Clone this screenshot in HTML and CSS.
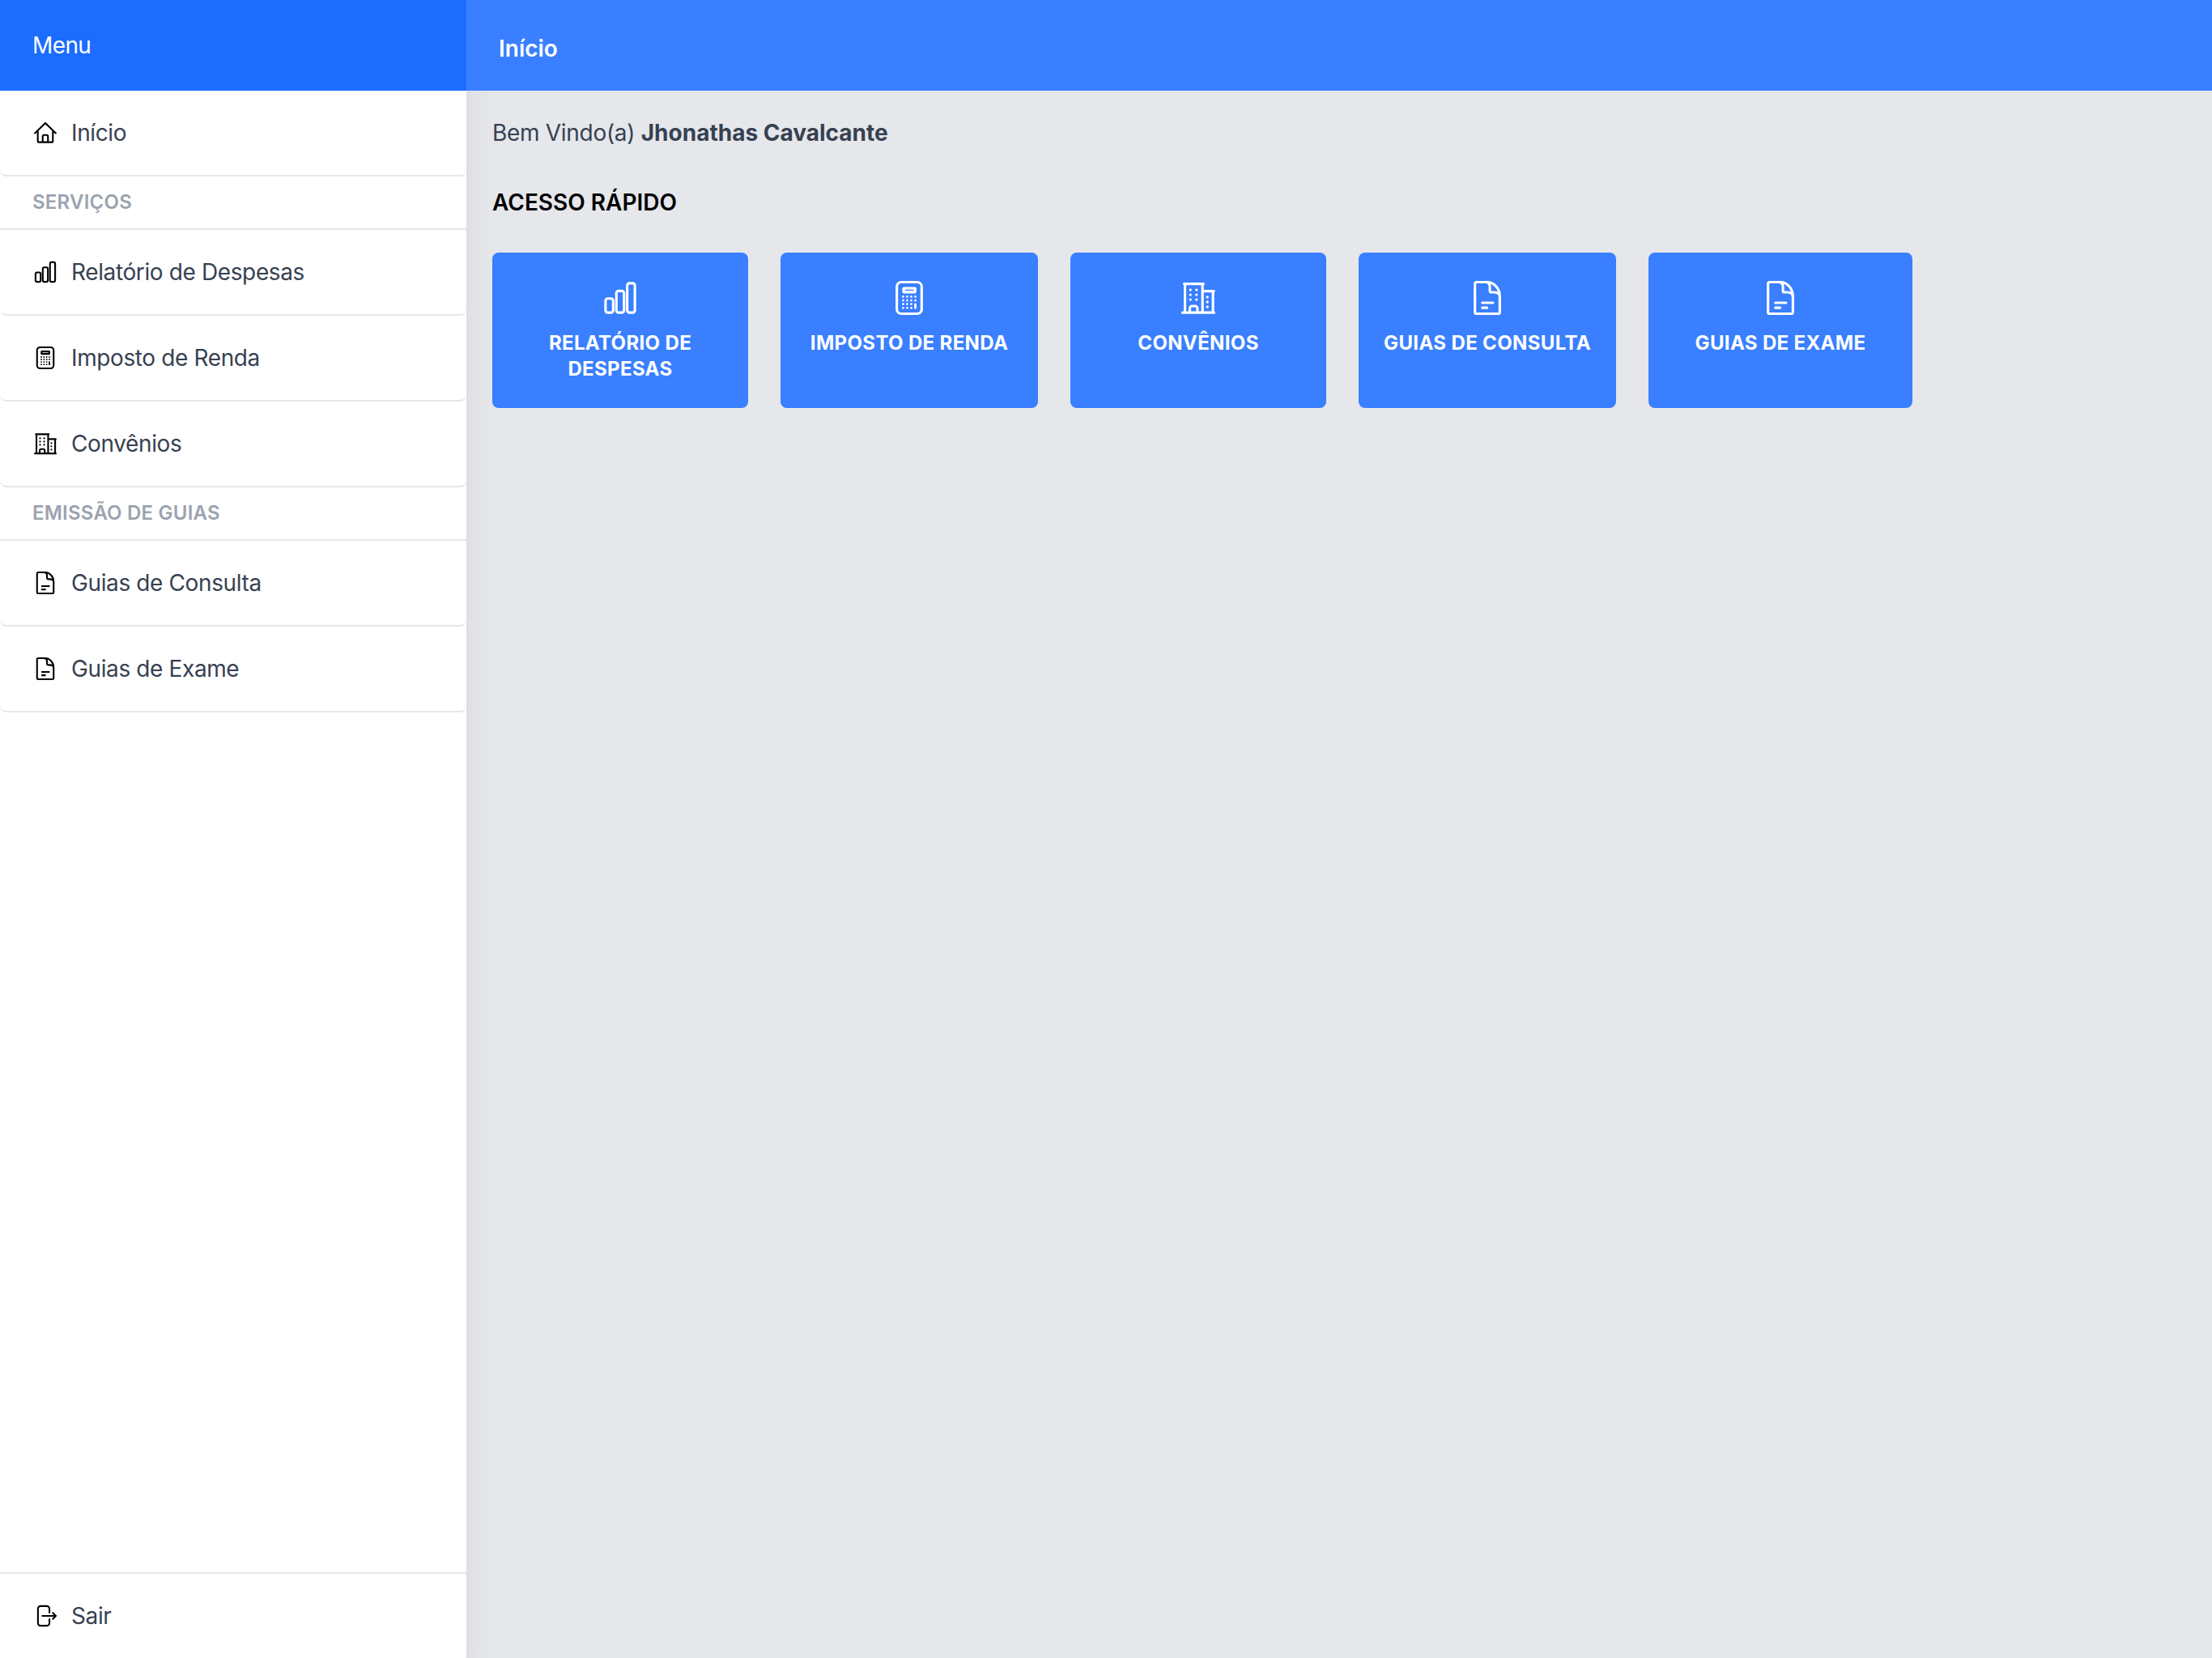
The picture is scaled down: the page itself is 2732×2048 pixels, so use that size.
FILE: index.html
```html
<!DOCTYPE html>
<html lang="pt-BR">
<head>
<meta charset="utf-8">
<title>Início</title>
<link rel="stylesheet" href="styles.css">
</head>
<body>
<svg class="sprite" aria-hidden="true">
  <symbol id="home" viewBox="-1.2 -1.2 34.4 34.4"><path d="M2.200 16.500 16 3l13.800 13.500M6 14v13.500a1 1 0 0 0 1 1h18a1 1 0 0 0 1-1V14M12.500 28v-7a2 2 0 0 1 2-2h3a2 2 0 0 1 2 2v7"/></symbol>
  <symbol id="bars" viewBox="-1.2 -1.2 34.4 34.4"><rect x="3" y="16.500" width="6.800" height="12.500" rx="2"/><rect x="12.600" y="9.800" width="6.800" height="19.200" rx="2"/><rect x="22.200" y="3" width="6.800" height="26" rx="2"/></symbol>
  <symbol id="calc" viewBox="-1.2 -1.2 34.4 34.4"><rect x="5" y="2" width="22" height="28" rx="4"/><rect class="thick" x="11" y="7.500" width="10.200" height="3.300" rx=".3"/><path class="keys" d="M10.600 14.900v0M14.200 14.900v0M17.800 14.900v0M21.400 14.900v0M10.600 18.200v0M14.200 18.200v0M17.800 18.200v0M21.400 18.200v0M10.600 21.500v0M14.200 21.500v0M17.800 21.500v0M10.600 24.800v0M14.200 24.800v0M17.800 24.800v0M21.400 21.600v3.200"/></symbol>
  <symbol id="building" viewBox="-1.2 -1.2 34.4 34.4"><path d="M3.400 3.500h17.200M4.200 3.500V29M19.700 3.500V29M20 10h9.800M29 10v19M2 29h28M8.500 29v-3.800a2 2 0 0 1 2-2h2.700a2 2 0 0 1 2 2V29"/><path class="thick" d="M9 8.900v0M14.400 8.900v0M9 13.200v0M14.400 13.200v0M9 17.500v0M14.400 17.500v0M24 15.300v0M24 19.600v0M24 23.900v0"/></symbol>
  <symbol id="doc" viewBox="-1.2 -1.2 34.4 34.4"><path d="M6.500 2H16c6 0 11 6 11 12.500v14a1.500 1.500 0 0 1-1.500 1.500h-19A1.500 1.500 0 0 1 5 28.500v-25A1.500 1.500 0 0 1 6.500 2ZM15 2c2.500.5 3.200 2.500 3.200 4v3.500a1.500 1.500 0 0 0 1.500 1.500H22c2.500 0 4.500 1 5 3.500M11.500 20.300h9.500M11.500 24.700h4.200"/></symbol>
  <symbol id="exit" viewBox="-1.2 -1.2 34.4 34.4"><path d="M21.400 11.600V6.500A3.500 3.500 0 0 0 17.900 3H9.700a3.500 3.500 0 0 0-3.500 3.500v19A3.500 3.500 0 0 0 9.700 29h8.200a3.500 3.500 0 0 0 3.500-3.500v-5.200M12 16h18M26 12l4 4-4 4"/></symbol>
</svg>
<div class="app">
  <aside class="sidebar">
    <div class="sidebar-head">Menu</div>
    <nav class="nav">
      <a class="item"><svg class="icon"><use href="#home"/></svg><span>Início</span></a>
      <div class="section">SERVIÇOS</div>
      <a class="item"><svg class="icon"><use href="#bars"/></svg><span>Relatório de Despesas</span></a>
      <a class="item"><svg class="icon"><use href="#calc"/></svg><span>Imposto de Renda</span></a>
      <a class="item"><svg class="icon"><use href="#building"/></svg><span>Convênios</span></a>
      <div class="section">EMISSÃO DE GUIAS</div>
      <a class="item"><svg class="icon"><use href="#doc"/></svg><span>Guias de Consulta</span></a>
      <a class="item"><svg class="icon"><use href="#doc"/></svg><span>Guias de Exame</span></a>
    </nav>
    <a class="logout"><svg class="icon"><use href="#exit"/></svg><span>Sair</span></a>
  </aside>
  <main class="main">
    <header class="topbar">Início</header>
    <div class="content">
      <p class="welcome">Bem Vindo(a) <strong>Jhonathas Cavalcante</strong></p>
      <h2 class="heading">ACESSO RÁPIDO</h2>
      <div class="cards">
        <a class="card"><svg class="icon"><use href="#bars"/></svg><span>RELATÓRIO DE DESPESAS</span></a>
        <a class="card"><svg class="icon"><use href="#calc"/></svg><span>IMPOSTO DE RENDA</span></a>
        <a class="card"><svg class="icon"><use href="#building"/></svg><span>CONVÊNIOS</span></a>
        <a class="card"><svg class="icon"><use href="#doc"/></svg><span>GUIAS DE CONSULTA</span></a>
        <a class="card"><svg class="icon"><use href="#doc"/></svg><span>GUIAS DE EXAME</span></a>
      </div>
    </div>
  </main>
</div>
</body>
</html>
```
FILE: styles.css
```css
* { box-sizing: border-box; }
body { margin: 0; font-family: Inter, "Liberation Sans", sans-serif; font-size: 28px; line-height: 40px; color: #374151; }
.sprite { position: absolute; width: 0; height: 0; }
.app { display: flex; height: 2048px; background: #e5e7eb; }
.sidebar { position: relative; z-index: 1; display: flex; flex-direction: column; width: 576px; flex: none; background: #fff; box-shadow: 0 40px 50px -10px rgba(0, 0, 0, .09), 0 20px 20px -10px rgba(0, 0, 0, .03); letter-spacing: -.38px; }
.sidebar-head { height: 112px; padding: 36px 40px; background: #1c6cfe; color: #fff; letter-spacing: -.6px; }
.nav { flex: 1; }
.item, .logout { display: flex; align-items: center; gap: 16px; padding: 0 40px; }
.item { height: 106px; border-bottom: 2px solid #e5e7eb; border-radius: 8px; }
.section { height: 66px; padding: 12px 40px; border-bottom: 2px solid #e5e7eb; font-size: 24px; font-weight: 600; letter-spacing: .22px; color: #9ca3af; }
.logout { height: 106px; border-top: 2px solid #e5e7eb; }
.icon { width: 32px; height: 32px; flex: none; fill: none; stroke: #000; stroke-width: 2.25; stroke-linecap: round; stroke-linejoin: round; }
.thick { stroke-width: 2.4; }
.keys { stroke-width: 2; }
.main { flex: 1; }
.topbar { position: relative; z-index: 2; height: 112px; padding: 40px; background: #397fff; color: #fff; font-weight: 600; }
.content { padding: 32px; }
.welcome { margin: 0; letter-spacing: -.3px; }
.welcome strong { letter-spacing: 0; }
.heading { margin: 46px 0 42px; font-size: 28px; line-height: 40px; font-weight: 600; color: #000; }
.cards { display: grid; grid-template-columns: 316px 318px 316px 318px 326px; gap: 40px; }
.card { display: flex; flex-direction: column; align-items: center; height: 192px; padding: 32px 28px 0; border-radius: 8px; background: #397fff; color: #fff; font-size: 24px; line-height: 32px; font-weight: 700; text-align: center; letter-spacing: .35px; }
.card .icon { width: 48px; height: 48px; margin-bottom: 16px; stroke: #fff; }
```
